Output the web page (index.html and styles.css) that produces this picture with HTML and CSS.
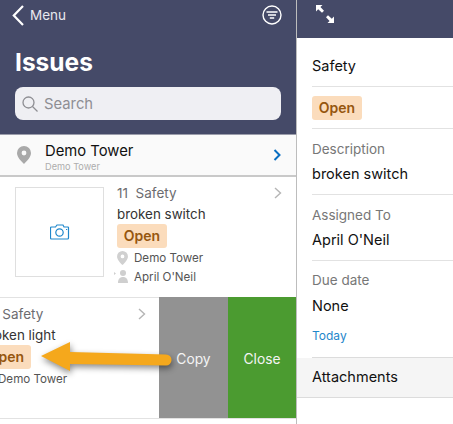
FILE: index.html
```html
<!DOCTYPE html>
<html lang="en">
<head>
  <meta charset="UTF-8" />
  <meta name="viewport" content="width=device-width, initial-scale=1.0"/>
  <title>Issues</title>
  <link rel="stylesheet" href="styles.css">
</head>
<body>
  <div class="app">

    <!-- Issue list -->
    <div class="list-pane">
      <header class="list-head">
        <div class="top-bar">
          <svg class="back-icon" width="12" height="21" viewBox="0 0 12 21"><path d="M11 1 1.800 10.500 11 20" fill="none" stroke="#fff" stroke-width="2.200"/></svg>
          <span class="back-label">Menu</span>
          <svg class="filter-icon" width="20" height="20" viewBox="0 0 20 20" fill="none" stroke="#fff"><circle cx="10" cy="10" r="9" stroke-width="1.400"/><path d="M4.500 7h11M6 10h8M7.800 13h4.400" stroke-width="1.600"/></svg>
        </div>
        <h1>Issues</h1>
        <div class="search">
          <svg width="16" height="16" viewBox="0 0 16 16" fill="none" stroke="#8e8e93" stroke-width="1.300"><circle cx="6.500" cy="6.500" r="5.500"/><path d="m10.500 10.500 5 5"/></svg>
          <span>Search</span>
        </div>
      </header>

      <div class="location">
        <svg width="14" height="18" viewBox="0 0 14 18"><path fill-rule="evenodd" fill="#a9a9a9" d="M7 0a7 7 0 0 1 7 7c0 4-4 8-7 11C4 15 0 11 0 7a7 7 0 0 1 7-7Zm0 4.600a2.400 2.400 0 1 0 0 4.800 2.400 2.400 0 0 0 0-4.800Z"/></svg>
        <div class="location-text">
          <div class="location-name">Demo Tower</div>
          <div class="location-sub">Demo Tower</div>
        </div>
        <svg width="8" height="12" viewBox="0 0 8 12"><path d="M1.500 1 6.500 6l-5 5" fill="none" stroke="#0a6fc2" stroke-width="2"/></svg>
      </div>

      <div class="issue">
        <div class="issue-body">
          <div class="thumb">
            <svg width="20" height="16" viewBox="0 0 20 16" fill="none" stroke="#1f87cb" stroke-width="1.200"><path d="M1.500 3h4l1.500-2h6l1 2h4a1 1 0 0 1 .5 1v10a1 1 0 0 1-1 1h-16a1 1 0 0 1-1-1V4a1 1 0 0 1 1-1Z"/><circle cx="9.500" cy="8.500" r="3.700"/><path d="M16 5.500h1.200"/></svg>
          </div>
          <div class="issue-info">
            <div class="issue-title"><span>11&nbsp; Safety</span>
              <svg width="8" height="12" viewBox="0 0 8 12"><path d="M1 1l5.500 5-5.500 5" fill="none" stroke="#b5b5b5" stroke-width="1.400"/></svg>
            </div>
            <div class="issue-desc">broken switch</div>
            <span class="badge">Open</span>
            <div class="meta">
              <svg width="11" height="14" viewBox="0 0 14 18"><path fill-rule="evenodd" fill="#d0d0d0" d="M7 0a7 7 0 0 1 7 7c0 4-4 8-7 11C4 15 0 11 0 7a7 7 0 0 1 7-7Zm0 4.600a2.400 2.400 0 1 0 0 4.800 2.400 2.400 0 0 0 0-4.800Z"/></svg>
              <span>Demo Tower</span>
            </div>
            <div class="meta">
              <svg class="person" width="15" height="13" viewBox="0 0 15 13" fill="#cfcfcf"><circle cx="9" cy="3" r="3"/><path d="M4 13c0-4 2-6 5-6s5 2 5 6ZM0 2l2 1.500L0 5Z"/></svg>
              <span>April O'Neil</span>
            </div>
          </div>
        </div>
      </div>

      <div class="issue swiped">
        <div class="issue-body">
          <div class="thumb"></div>
          <div class="issue-info">
            <div class="issue-title"><span>12&nbsp; Safety</span>
              <svg width="8" height="12" viewBox="0 0 8 12"><path d="M1 1l5.500 5-5.500 5" fill="none" stroke="#b5b5b5" stroke-width="1.400"/></svg>
            </div>
            <div class="issue-desc">broken light</div>
            <span class="badge">Open</span>
            <div class="meta">
              <svg width="11" height="14" viewBox="0 0 14 18"><path fill-rule="evenodd" fill="#d0d0d0" d="M7 0a7 7 0 0 1 7 7c0 4-4 8-7 11C4 15 0 11 0 7a7 7 0 0 1 7-7Zm0 4.600a2.400 2.400 0 1 0 0 4.800 2.400 2.400 0 0 0 0-4.800Z"/></svg>
              <span>Demo Tower</span>
            </div>
          </div>
        </div>
        <div class="action copy">Copy</div>
        <div class="action close">Close</div>
        <!-- callout arrow -->
        <svg class="arrow" width="140" height="40" viewBox="0 0 140 40"><path d="M4 17 33 3v10l96 2.500a5.500 5.500 0 0 1 0 11L33 25v7Z" fill="#f5a81c"/></svg>
      </div>
    </div>

    <!-- Issue detail -->
    <div class="detail-pane">
      <header class="detail-head">
        <svg width="20" height="20" viewBox="0 0 20 20" fill="#fff"><path d="M1 1h6.500L5.400 3.100 9 6.700 7 8.700 3.200 5.200 1 7.500ZM19 19h-6.500l2.100-2.100L11 13.300l2-2 3.800 3.500 2.200-2.300Z"/></svg>
      </header>
      <div class="field plain">Safety</div>
      <div class="field status"><span class="badge">Open</span></div>
      <div class="field">
        <div class="field-label">Description</div>
        <div class="field-value">broken switch</div>
      </div>
      <div class="field">
        <div class="field-label">Assigned To</div>
        <div class="field-value">April O'Neil</div>
      </div>
      <div class="field due">
        <div class="field-label">Due date</div>
        <div class="field-value">None</div>
        <div class="today">Today</div>
      </div>
      <div class="attachments">Attachments</div>
    </div>

  </div>
</body>
</html>
```

FILE: styles.css
```css
* {
  box-sizing: border-box;
  margin: 0;
  padding: 0;
}

body {
  font-family: Inter, 'Liberation Sans', sans-serif;
  background: #fff;
  color: #222;
  overflow: hidden;
}

.app {
  display: flex;
  width: 453px;
  height: 424px;
}

/* Issue list */
.list-pane {
  width: 297px;
  flex-shrink: 0;
  border-right: 1px solid #bdbdbd;
  overflow: hidden;
}

.list-head {
  height: 135px;
  background: #454a68;
  border-bottom: 1px solid #9b9dab;
  padding: 5px 15px 0 12px;
}

.top-bar {
  display: flex;
  align-items: center;
  height: 20px;
}

.back-label {
  color: #e8e8ee;
  font-size: 13.500px;
  margin-left: 6px;
}

.filter-icon {
  margin-left: auto;
  margin-right: -1px;
}

h1 {
  color: #fff;
  font-size: 24.500px;
  line-height: 32px;
  font-weight: 700;
  margin: 21px 0 0 3px;
}

.search {
  display: flex;
  align-items: center;
  gap: 6px;
  height: 33px;
  margin: 9px 0 0 3px;
  padding-left: 7px;
  background: #efeff3;
  border-radius: 8px;
  color: #8e8e93;
  font-size: 14.800px;
}

.location {
  display: flex;
  align-items: center;
  height: 42px;
  padding: 0 15px 0 17px;
  background: #fafafa;
  border-bottom: 2px solid #c9c9c9;
}

.location-text {
  flex: 1;
  margin-left: 14px;
  padding-top: 3px;
}

.location-name {
  font-size: 14.800px;
  line-height: 19px;
  color: #111;
}

.location-sub {
  font-size: 9.200px;
  line-height: 11px;
  color: #adadad;
}

/* Rows */
.issue {
  display: flex;
  height: 120px;
  overflow: hidden;
}

.issue-body {
  display: flex;
  width: 295px;
  flex-shrink: 0;
  padding: 10px 13px 0 15px;
}

.thumb {
  display: flex;
  align-items: center;
  justify-content: center;
  width: 89px;
  height: 90px;
  flex-shrink: 0;
  border: 1px solid #dfdfdf;
}

.issue-info {
  flex: 1;
  margin-left: 13px;
}

.issue-title {
  display: flex;
  align-items: center;
  justify-content: space-between;
  height: 11px;
  font-size: 13.500px;
  color: #6c6c70;
}

.issue-desc {
  font-size: 13.400px;
  line-height: 18px;
  margin-top: 7px;
  color: #333;
}

.badge {
  display: inline-block;
  width: 50px;
  height: 24px;
  background: #fbdcbc;
  border-radius: 3px;
  color: #96560f;
  font-size: 14px;
  font-weight: 600;
  line-height: 24px;
  text-align: center;
}

.issue .badge {
  margin-top: 1px;
}

.meta {
  display: flex;
  align-items: center;
  height: 19px;
  font-size: 11.600px;
  color: #555;
}

.meta svg {
  flex-shrink: 0;
  margin-right: 6px;
}

.meta .person {
  margin-left: -3px;
  margin-right: 5px;
}

.swiped {
  position: relative;
  height: 122px;
  border-bottom: 1px solid #e2e2e2;
}

.swiped .issue-body {
  margin-left: -136px;
  border-top: 1px solid #e2e2e2;
}

.action {
  display: flex;
  align-items: center;
  justify-content: center;
  height: 121px;
  padding-top: 2px;
  color: #f4f4f4;
  font-size: 13.800px;
}

.copy {
  width: 69px;
  background: #929292;
}

.close {
  width: 68px;
  background: #4b9b30;
}

.arrow {
  position: absolute;
  left: 37px;
  top: 42px;
  filter: drop-shadow(1px 3px 3px rgba(0, 0, 0, 0.45));
}

/* Issue detail */
.detail-pane {
  flex: 1;
  min-width: 0;
}

.detail-head {
  height: 38px;
  background: #454a68;
  padding: 4px 0 0 18px;
}

.field {
  margin-left: 15px;
  border-bottom: 1px solid #e2e2e2;
  height: 66px;
  padding-top: 11px;
}

.plain {
  height: 49px;
  padding-top: 19px;
  font-size: 14.500px;
  line-height: 18px;
  color: #111;
}

.status {
  height: 42px;
  padding-top: 9px;
}

.field-label {
  font-size: 13.500px;
  line-height: 18px;
  color: #777;
}

.field-value {
  font-size: 14.500px;
  line-height: 18px;
  margin-top: 7px;
  color: #111;
}

.due {
  height: 97px;
  border-bottom-color: #dcdcdc;
  padding-top: 10px;
}

.due .field-value {
  margin-top: 8px;
}

.today {
  font-size: 12px;
  line-height: 14px;
  margin-top: 14px;
  color: #1f87cb;
}

.attachments {
  height: 40px;
  padding: 10px 0 0 15px;
  background: #f5f5f5;
  border-bottom: 1px solid #dcdcdc;
  font-size: 14.500px;
  line-height: 18px;
  color: #111;
}
```
